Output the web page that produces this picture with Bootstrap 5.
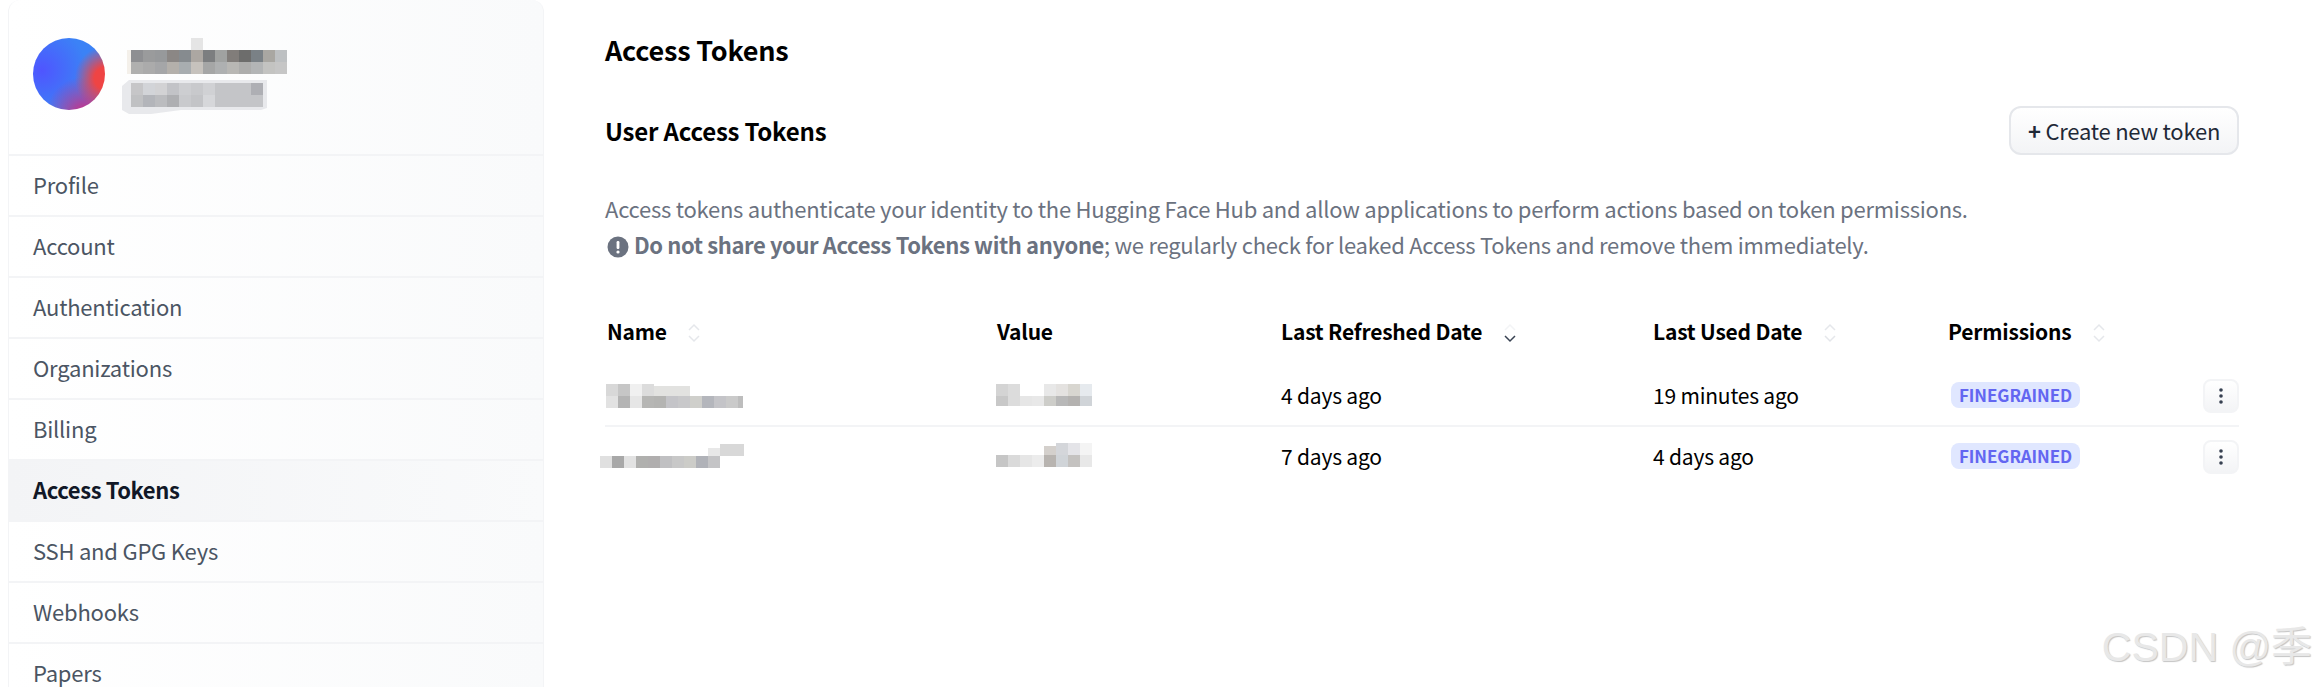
<!DOCTYPE html>
<html lang="en">
<head>
    <meta charset="UTF-8">
    <title>Access Tokens</title>
    <link href="https://cdn.jsdelivr.net/npm/bootstrap@5.3.0/dist/css/bootstrap.min.css" rel="stylesheet">
    <style>
        html, body { height: 687px; overflow: hidden; }
        body { font-family: "Noto Sans CJK SC", "Liberation Sans", sans-serif; font-size: 22px; letter-spacing: -.22px; background: #fff; color: #000; }
        .page-wrap { height: 687px; }
        .side-panel { width: 536px; margin-left: 8px; flex: none; border: 1px solid #f3f4f6; border-bottom: 0; border-top: 0; border-radius: 12px 12px 0 0; background: linear-gradient(to right, #fff, #f9fafb); }
        .side-head { height: 156px; padding: 38px 0 0 24px; border-bottom: 2px solid #f3f4f6; }
        .avatar-ball { width: 72px; height: 72px; border-radius: 50%; background: radial-gradient(ellipse 42% 44% at 100% 56%, #ef4444 0, #ef4444 35%, rgba(239,68,68,0) 100%), radial-gradient(circle at 72% 108%, #db2777 0, rgba(219,39,119,0) 42%), radial-gradient(circle at 12% 45%, #4f55ff 0, rgba(79,85,255,0) 60%), #3b82f6; }
        .side-link { display: block; height: 61px; line-height: 57px; padding-left: 24px; font-size: 22px; color: #4b5563; text-decoration: none; border-bottom: 2px solid #f3f4f6; }
        .side-link.is-on { color: #111827; font-weight: 600; letter-spacing: -.4px; background: linear-gradient(to right, #f3f4f6, #f9fafb); }
        .main-area { padding: 0 77px 0 61px; }
        .page-title { font-size: 27px; font-weight: 700; line-height: 36px; margin: 32px 0 0; letter-spacing: -.2px; }
        .sub-title { font-size: 24px; font-weight: 600; line-height: 36px; margin: 0; letter-spacing: -.2px; }
        .sub-row { margin-top: 38px; height: 49px; }
        .new-btn { width: 230px; height: 49px; padding: 0; font-size: 22px; letter-spacing: -.22px; line-height: 43px; color: #1f2937; border: 2px solid #e5e7eb; border-radius: 12px; background: linear-gradient(to bottom, #fff, #f3f4f6); }
        .new-btn b { font-weight: 700; }
        .intro-text { margin: 35px 0 0; font-size: 22px; line-height: 36px; letter-spacing: -.25px; color: #6b7280; }
        .intro-text strong { font-weight: 600; letter-spacing: -.39px; }
        .warn-dot { width: 22px; height: 22px; vertical-align: -4px; margin-right: 5px; margin-left: 2px; }
        .token-table { margin: 36px 0 0; width: 1634px; table-layout: fixed; }
        .token-table th, .token-table td { padding: 0; border: 0; background: transparent; box-shadow: none; vertical-align: middle; font-size: 21px; letter-spacing: -.2px; color: #000; }
        .token-table th { font-weight: 600; height: 68px; }
        .token-table th.name-head { padding-left: 2px; }
        .token-table tbody tr { height: 60px; }
        .token-table tbody tr + tr td { border-top: 2px solid #f3f4f6; }
        .sort-mark { width: 16px; height: 24px; margin-left: 15px; vertical-align: -5px; }
        .fine-tag { display: inline-block; margin-left: 3px; padding: 0 8px; height: 26px; line-height: 25px; font-size: 17px; font-weight: 600; color: #6366f1; background: #e0e7ff; border-radius: 8px; vertical-align: 2px; letter-spacing: -.1px; }
        .more-btn { width: 36px; height: 34px; padding: 0; border: 2px solid #f3f4f6; border-radius: 8px; background: linear-gradient(to bottom, #fff, #f3f4f6); display: inline-flex; align-items: center; justify-content: center; }
        .blur-bit { display: block; overflow: visible; }
        .stamp-mark { position: absolute; right: 4px; bottom: 20px; font-family: "Liberation Sans", "Noto Sans CJK SC", sans-serif; font-size: 41px; letter-spacing: 0; line-height: 40px; color: #e8e8e8; text-shadow: 1px 1px 1px #c4c4c4; }
    </style>
</head>
<body>
    <div class="page-wrap d-flex position-relative">
        <!-- Sidebar -->
        <aside class="side-panel overflow-hidden">
            <div class="side-head d-flex">
                <div class="avatar-ball"></div>
                <svg class="blur-bit ms-3" width="170" height="80" viewBox="0 0 170 80">
                    <g transform="translate(8 0)">
                        <rect x="2" y="12" width="12" height="12" fill="#8e8f92"/><rect x="14" y="12" width="12" height="12" fill="#9a9b9c"/><rect x="26" y="12" width="12" height="12" fill="#97999b"/><rect x="38" y="12" width="12" height="12" fill="#8b8785"/><rect x="50" y="12" width="12" height="12" fill="#868b8f"/><rect x="62" y="12" width="12" height="12" fill="#aca7a2"/><rect x="74" y="12" width="12" height="12" fill="#7c7e80"/><rect x="86" y="12" width="12" height="12" fill="#a0a2a1"/><rect x="98" y="12" width="12" height="12" fill="#817d7a"/><rect x="110" y="12" width="12" height="12" fill="#6d6d6c"/><rect x="122" y="12" width="12" height="12" fill="#7a8186"/><rect x="134" y="12" width="12" height="12" fill="#a9a7a2"/><rect x="146" y="12" width="12" height="12" fill="#bdc0c2"/>
                        <rect x="2" y="24" width="12" height="12" fill="#b0b0af"/><rect x="14" y="24" width="12" height="12" fill="#ababab"/><rect x="26" y="24" width="12" height="12" fill="#a5a6a8"/><rect x="38" y="24" width="12" height="12" fill="#b4b0ab"/><rect x="50" y="24" width="12" height="12" fill="#a8adb0"/><rect x="62" y="24" width="12" height="12" fill="#c6c2bd"/><rect x="74" y="24" width="12" height="12" fill="#a5a6a6"/><rect x="86" y="24" width="12" height="12" fill="#aeb0b1"/><rect x="98" y="24" width="12" height="12" fill="#b8b7b4"/><rect x="110" y="24" width="12" height="12" fill="#adadac"/><rect x="122" y="24" width="12" height="12" fill="#b3b5b6"/><rect x="134" y="24" width="12" height="12" fill="#c3c3c1"/><rect x="146" y="24" width="12" height="12" fill="#c6c6c6"/>
                        <rect x="62" y="0" width="12" height="12" fill="#e5e5e5"/>
                        <rect x="-2" y="12" width="4" height="24" fill="#f4f0ea"/>
                    </g>
                    <path d="M1 48 L8 42 H146 V70 L140 72 H60 L30 76 H8 L1 72Z" fill="#e8e9ec"/>
                    <g transform="translate(0 -7)">
                        <rect x="10" y="52" width="12" height="12" fill="#c6c6c8"/><rect x="22" y="52" width="12" height="12" fill="#d2d4d8"/><rect x="34" y="52" width="12" height="12" fill="#d2d2d4"/><rect x="46" y="52" width="12" height="12" fill="#c2c3c7"/><rect x="58" y="52" width="12" height="12" fill="#cdced1"/><rect x="70" y="52" width="12" height="12" fill="#c8c9cc"/><rect x="82" y="52" width="12" height="12" fill="#d0d1d4"/><rect x="94" y="52" width="36" height="12" fill="#c4c5c8"/><rect x="130" y="52" width="12" height="12" fill="#aeafb4"/>
                        <rect x="10" y="64" width="12" height="12" fill="#c0c1c3"/><rect x="22" y="64" width="12" height="12" fill="#b3b5ba"/><rect x="34" y="64" width="12" height="12" fill="#bbbcbf"/><rect x="46" y="64" width="12" height="12" fill="#aeafb2"/><rect x="58" y="64" width="12" height="12" fill="#c9cacd"/><rect x="70" y="64" width="12" height="12" fill="#c3c4c7"/><rect x="82" y="64" width="12" height="12" fill="#d6d7da"/><rect x="94" y="64" width="48" height="12" fill="#c4c5c8"/>
                    </g>
                </svg>
            </div>
            <nav>
                <a class="side-link" href="#">Profile</a>
                <a class="side-link" href="#">Account</a>
                <a class="side-link" href="#">Authentication</a>
                <a class="side-link" href="#">Organizations</a>
                <a class="side-link" href="#">Billing</a>
                <a class="side-link is-on" href="#">Access Tokens</a>
                <a class="side-link" href="#">SSH and GPG Keys</a>
                <a class="side-link" href="#">Webhooks</a>
                <a class="side-link" href="#">Papers</a>
            </nav>
        </aside>

        <!-- Main -->
        <main class="main-area flex-grow-1">
            <h1 class="page-title">Access Tokens</h1>
            <div class="sub-row d-flex align-items-center justify-content-between">
                <h2 class="sub-title">User Access Tokens</h2>
                <button class="new-btn btn"><b>+</b> Create new token</button>
            </div>
            <p class="intro-text">Access tokens authenticate your identity to the Hugging Face Hub and allow applications to perform actions based on token permissions.<br>
                <svg class="warn-dot" viewBox="0 0 22 22"><circle cx="11" cy="11" r="10.5" fill="#6b7280"/><rect x="9.6" y="5" width="2.8" height="8" rx="1.2" fill="#fff"/><circle cx="11" cy="16" r="1.6" fill="#fff"/></svg><strong>Do not share your Access Tokens with anyone</strong>; we regularly check for leaked Access Tokens and remove them immediately.</p>

            <table class="token-table table">
                <colgroup>
                    <col style="width:392px"><col style="width:284px"><col style="width:372px"><col style="width:295px"><col style="width:230px"><col>
                </colgroup>
                <thead>
                    <tr>
                        <th class="name-head">Name <svg class="sort-mark" viewBox="0 0 16 24" fill="none" stroke="#e5e7eb" stroke-width="1.5"><path d="M3 9l5-5 5 5M3 15l5 5 5-5"/></svg></th>
                        <th>Value</th>
                        <th>Last Refreshed Date <svg class="sort-mark" viewBox="0 0 16 24" fill="none" stroke-width="1.5"><path stroke="#f3f4f6" d="M3 9l5-5 5 5"/><path stroke="#374151" d="M3 15l5 5 5-5"/></svg></th>
                        <th>Last Used Date <svg class="sort-mark" viewBox="0 0 16 24" fill="none" stroke="#e5e7eb" stroke-width="1.5"><path d="M3 9l5-5 5 5M3 15l5 5 5-5"/></svg></th>
                        <th>Permissions <svg class="sort-mark" viewBox="0 0 16 24" fill="none" stroke="#e5e7eb" stroke-width="1.5"><path d="M3 9l5-5 5 5M3 15l5 5 5-5"/></svg></th>
                        <th></th>
                    </tr>
                </thead>
                <tbody>
                    <tr>
                        <td><svg class="blur-bit" width="140" height="28" viewBox="0 0 140 28"><g transform="translate(0 2)"><rect x="1" y="0" width="12" height="12" fill="#d8d8d8"/><rect x="13" y="0" width="12" height="12" fill="#c6c6c6"/><rect x="25" y="0" width="12" height="12" fill="#f0f0f0"/><rect x="37" y="0" width="12" height="12" fill="#dcdcdc"/><rect x="49" y="2" width="36" height="10" fill="#e2e2e0"/><rect x="1" y="12" width="12" height="12" fill="#e2e2e2"/><rect x="13" y="12" width="12" height="12" fill="#b4b4b4"/><rect x="25" y="12" width="12" height="12" fill="#e6e6e6"/><rect x="37" y="12" width="12" height="12" fill="#b6b6b4"/><rect x="49" y="12" width="12" height="12" fill="#b4b4b2"/><rect x="61" y="12" width="12" height="12" fill="#c4c4c8"/><rect x="73" y="12" width="12" height="12" fill="#c8c8ca"/><rect x="85" y="12" width="12" height="12" fill="#cfcfcb"/><rect x="97" y="12" width="12" height="12" fill="#b4b6bc"/><rect x="109" y="12" width="12" height="12" fill="#c4c4c8"/><rect x="121" y="12" width="12" height="12" fill="#cacaca"/><rect x="133" y="12" width="5" height="12" fill="#bdbdbd"/></g></svg></td>
                        <td><svg class="blur-bit" width="96" height="28" viewBox="0 0 96 28"><g transform="translate(-1 2)"><rect x="0" y="0" width="12" height="12" fill="#d4d4d4"/><rect x="12" y="0" width="12" height="12" fill="#dcdcdc"/><rect x="48" y="0" width="12" height="12" fill="#e8e8e8"/><rect x="60" y="0" width="12" height="12" fill="#e4e2e0"/><rect x="72" y="0" width="12" height="12" fill="#d8d6d0"/><rect x="84" y="0" width="12" height="12" fill="#e6eaee"/><rect x="0" y="12" width="12" height="10" fill="#c8c8c8"/><rect x="12" y="12" width="12" height="10" fill="#dcdcdc"/><rect x="24" y="12" width="12" height="10" fill="#e6e6e6"/><rect x="36" y="12" width="12" height="10" fill="#e8e8e8"/><rect x="48" y="12" width="12" height="10" fill="#cdcdc9"/><rect x="60" y="12" width="12" height="10" fill="#b8b8b8"/><rect x="72" y="12" width="12" height="10" fill="#b4b2b0"/><rect x="84" y="12" width="12" height="10" fill="#d0d4d8"/></g></svg></td>
                        <td>4 days ago</td>
                        <td>19 minutes ago</td>
                        <td><span class="fine-tag">FINEGRAINED</span></td>
                        <td class="text-end"><button class="more-btn"><svg width="6" height="18" viewBox="0 0 6 18" fill="#374151"><circle cx="3" cy="3" r="1.8"/><circle cx="3" cy="9" r="1.8"/><circle cx="3" cy="15" r="1.8"/></svg></button></td>
                    </tr>
                    <tr>
                        <td><svg class="blur-bit" width="140" height="30" viewBox="0 0 140 30"><g transform="translate(-5 2)"><rect x="108" y="4" width="12" height="8" fill="#e8e8e8"/><rect x="120" y="0" width="24" height="12" fill="#d8d8d8"/><rect x="0" y="12" width="12" height="12" fill="#e0e0e0"/><rect x="12" y="12" width="12" height="12" fill="#a8a8a8"/><rect x="24" y="12" width="12" height="12" fill="#e2e2e2"/><rect x="36" y="12" width="12" height="12" fill="#b0b0ae"/><rect x="48" y="12" width="12" height="12" fill="#b0aeae"/><rect x="60" y="12" width="12" height="12" fill="#c0c0c2"/><rect x="72" y="12" width="12" height="12" fill="#c8c8c8"/><rect x="84" y="12" width="12" height="12" fill="#ccccc8"/><rect x="96" y="12" width="12" height="12" fill="#b0b2b8"/><rect x="108" y="12" width="12" height="12" fill="#c4c4c6"/></g></svg></td>
                        <td><svg class="blur-bit" width="96" height="28" viewBox="0 0 96 28"><g transform="translate(-1 3)"><rect x="48" y="0" width="12" height="9" fill="#d4d0cc"/><rect x="60" y="-3" width="12" height="12" fill="#d4d6da"/><rect x="72" y="-3" width="12" height="12" fill="#e4e4e8"/><rect x="84" y="-3" width="12" height="12" fill="#f4f4f4"/><rect x="0" y="9" width="12" height="12" fill="#c6c6c6"/><rect x="12" y="9" width="12" height="12" fill="#dadada"/><rect x="24" y="9" width="12" height="12" fill="#e6e6e6"/><rect x="36" y="9" width="12" height="12" fill="#ececec"/><rect x="48" y="9" width="12" height="12" fill="#b8b4b0"/><rect x="60" y="9" width="12" height="12" fill="#d0d4d8"/><rect x="72" y="9" width="12" height="12" fill="#c4c2c0"/><rect x="84" y="9" width="12" height="12" fill="#e8e8e8"/></g></svg></td>
                        <td>7 days ago</td>
                        <td>4 days ago</td>
                        <td><span class="fine-tag">FINEGRAINED</span></td>
                        <td class="text-end"><button class="more-btn"><svg width="6" height="18" viewBox="0 0 6 18" fill="#374151"><circle cx="3" cy="3" r="1.8"/><circle cx="3" cy="9" r="1.8"/><circle cx="3" cy="15" r="1.8"/></svg></button></td>
                    </tr>
                </tbody>
            </table>
        </main>
        <div class="stamp-mark">CSDN @季</div>
    </div>
    <script src="https://cdn.jsdelivr.net/npm/bootstrap@5.3.0/dist/js/bootstrap.bundle.min.js"></script>
</body>
</html>
